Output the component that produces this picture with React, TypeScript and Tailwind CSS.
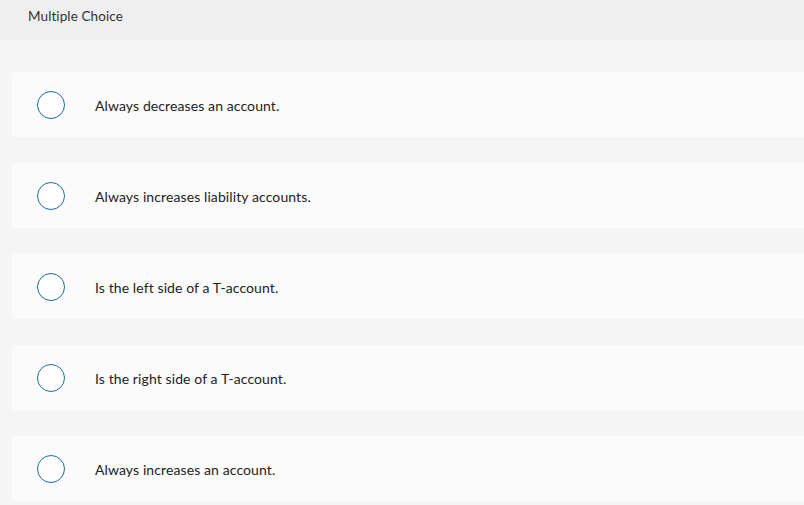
import React from "react";

const options = [
  "Always decreases an account.",
  "Always increases liability accounts.",
  "Is the left side of a T-account.",
  "Is the right side of a T-account.",
  "Always increases an account.",
];

export default function App() {
  return (
    <div
      className="w-[804px] h-[505px] bg-[#f5f5f5] overflow-hidden text-[#222]"
      style={{ fontFamily: "Lato, 'Open Sans', sans-serif" }}
    >
      <div className="h-[40px] bg-[#efefef] pl-[28px] pt-[6px] text-[13.5px] tracking-[0.1px] text-[#333]">
        Multiple Choice
      </div>
      <div className="flex flex-col gap-[26px] pt-[32px] pl-[12px]">
        {options.map((o) => (
          <div
            key={o}
            className="h-[65px] bg-[#fbfbfb] rounded-l-[3px] flex items-center"
          >
            <div className="ml-[25px] w-[28px] h-[28px] rounded-full border-[1.5px] border-[#1b6aa5] bg-white shrink-0" />
            <div className="ml-[30px] pt-[2px] text-[14px] tracking-[0.1px] text-[#222]">{o}</div>
          </div>
        ))}
      </div>
    </div>
  );
}
